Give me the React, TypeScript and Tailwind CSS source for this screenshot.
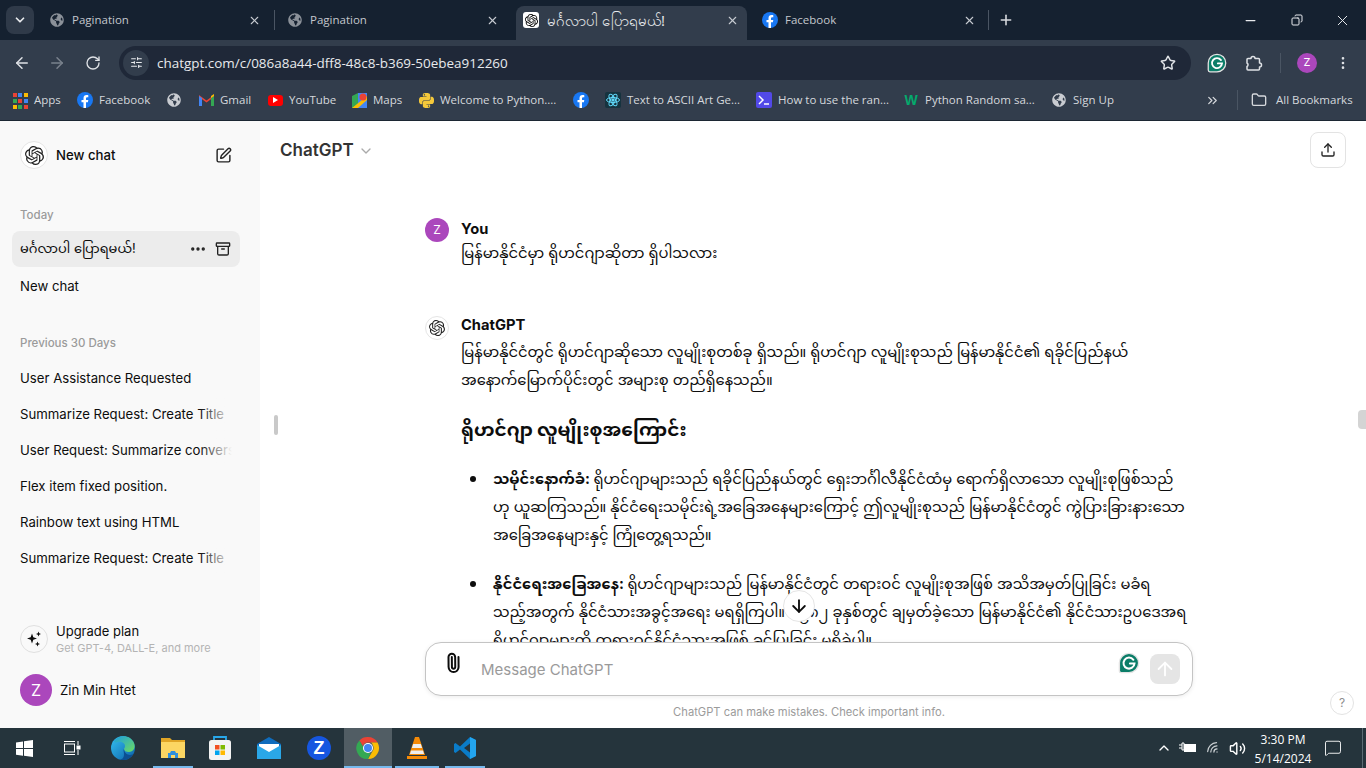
import React from "react";
import {
  ArrowLeft,
  ArrowRight,
  RotateCw,
  Star,
  EllipsisVertical,
  ChevronDown,
  ChevronsRight,
  Folder,
  X,
  Plus,
  Minus,
  Copy,
  Ellipsis,
  Archive,
  SquarePen,
  Upload,
  Paperclip,
  ArrowUp,
  ArrowDown,
  SlidersHorizontal,
  ChevronUp,
  Volume2,
  Wifi,
  MessageSquare,
} from "lucide-react";
import { SiOpenai, SiPython } from "react-icons/si";
import { FaGlobeAmericas } from "react-icons/fa";

const MY = "font-['Inter','Noto_Sans_Myanmar','Padauk','Noto_Sans','sans-serif']";

function FbIcon({ size = 16 }: { size?: number }) {
  return (
    <svg width={size} height={size} viewBox="0 0 16 16" className="shrink-0">
      <circle cx="8" cy="8" r="8" fill="#1877f2" />
      <path d="M10.9 10.3l.4-2.3H9V6.5c0-.6.3-1.2 1.3-1.2h1V3.3s-.9-.2-1.8-.2C7.7 3.1 6.5 4.300 6.500 6.300V8H4.500v2.300h2V16h2.500v-5.700z" fill="#fff" />
    </svg>
  );
}

function Tab({ title, icon, active, width }: { title: string; icon: React.ReactNode; active?: boolean; width: string }) {
  return (
    <div
      className={`${width} h-[34px] pb-[6px] flex items-center shrink-0 rounded-t-lg pl-[7px] pr-[8px] ${active ? "bg-[#323d4c]" : ""}`}
    >
      <span className="w-4 h-4 flex items-center justify-center shrink-0">{icon}</span>
      <span className={`flex-1 truncate ${active ? "ml-2 text-[15px] leading-5 text-[#e8eaed]" : "ml-[7px] text-[11.500px] text-[#c3c7cd]"}`}>{title}</span>
      <X size={13} className="text-[#c7cbd1] shrink-0" />
    </div>
  );
}

function Bookmark({ label, icon, width }: { label?: string; icon: React.ReactNode; width: string }) {
  return (
    <div className={`${width} flex items-center shrink-0`}>
      <span className="w-4 h-4 flex items-center justify-center shrink-0">{icon}</span>
      {label && <span className="ml-[6px] text-[11.500px] text-[#d5d8dc] whitespace-nowrap">{label}</span>}
    </div>
  );
}

function AppsIcon() {
  const colors = ["#ea4335", "#4285f4", "#fbbc04", "#34a853", "#ea4335", "#4285f4", "#fbbc04", "#34a853", "#ea4335"];
  return (
    <div className="grid grid-cols-3 gap-[2px] w-[14px] h-[14px]">
      {colors.map((c, i) => (
        <svg key={i} width="4" height="4"><rect width="4" height="4" fill={c} /></svg>
      ))}
    </div>
  );
}

function GrammarlyIcon({ size = 22 }: { size?: number }) {
  return (
    <svg width={size} height={size} viewBox="0 0 24 24">
      <path d="M12 1.500a10.500 10.500 0 1 1 0 21H3.500a2 2 0 0 1-2-2V12A10.500 10.500 0 0 1 12 1.500z" fill="#0b7d68" stroke="#e4e4e4" strokeWidth="1.500" />
      <path d="M16.800 8.500A6 6 0 1 0 18 12.500h-5" fill="none" stroke="#fff" strokeWidth="2.200" strokeLinecap="round" />
    </svg>
  );
}

function OpenAiBadge({ size, icon }: { size: string; icon: number }) {
  return (
    <div className={`${size} rounded-full border border-[#e5e5e5] bg-white flex items-center justify-center shrink-0`}>
      <SiOpenai size={icon} className="text-[#222]" />
    </div>
  );
}

function Sparkles() {
  return (
    <svg width="18" height="18" viewBox="0 0 18 18" fill="#0d0d0d">
      <path d="M7 3.500l1.300 3.700L12 8.500 8.300 9.800 7 13.500 5.700 9.800 2 8.500l3.700-1.300z" />
      <path d="M13.500 1.500l.7 1.800 1.800.7-1.800.7-.7 1.800-.7-1.800L11 4l1.800-.7z" />
      <path d="M12.500 11.500l.7 1.800 1.800.7-1.800.7-.7 1.800-.7-1.800-1.800-.7 1.800-.7z" />
    </svg>
  );
}

function SidebarRow({ label, fade }: { label: string; fade?: boolean }) {
  return (
    <div className="h-9 px-2 flex items-center text-[13.200px] text-[#0d0d0d] whitespace-nowrap overflow-hidden relative">
      {label}
      {fade && <div className="absolute right-0 top-0 bottom-0 w-8 bg-gradient-to-l from-[#f9f9f9] to-transparent" />}
    </div>
  );
}

function Sidebar() {
  return (
    <aside className="w-[260px] shrink-0 bg-[#f9f9f9] flex flex-col pl-3 pr-5 pt-5 pb-[22px]">
      <div className="h-7 px-2 flex items-center">
        <OpenAiBadge size="w-7 h-7" icon={19} />
        <span className="ml-2 mt-[2px] flex-1 text-[13.200px] font-medium text-[#0d0d0d]">New chat</span>
        <SquarePen size={17} strokeWidth={2} className="text-[#222]" />
      </div>
      <div className="mt-[38px] px-2 text-[11.500px] font-medium text-[#9b9b9b] leading-4">Today</div>
      <div className="mt-[8px] h-9 px-2 rounded-lg bg-[#ececec] flex items-center">
        <span className={`flex-1 text-[13px] text-[#0d0d0d] ${MY}`}>မင်္ဂလာပါ ပြောရမယ်!</span>
        <Ellipsis size={18} strokeWidth={2.500} className="text-[#222] mr-2" />
        <Archive size={16} className="text-[#222] mr-[1px]" />
      </div>
      <div className="mt-[2px]">
        <SidebarRow label="New chat" />
      </div>
      <div className="mt-[30px] px-2 text-[11.500px] font-medium text-[#9b9b9b] leading-4">Previous 30 Days</div>
      <div className="mt-[10px] w-[220px]">
        <SidebarRow label="User Assistance Requested" />
        <SidebarRow label="Summarize Request: Create Title" fade />
        <SidebarRow label="User Request: Summarize conversation" fade />
        <SidebarRow label="Flex item fixed position." />
        <SidebarRow label="Rainbow text using HTML" />
        <SidebarRow label="Summarize Request: Create Title" fade />
      </div>
      <div className="mt-auto px-2 flex items-center h-[36px]">
        <div className="w-7 h-7 rounded-full border border-[#e0e0e0] flex items-center justify-center shrink-0">
          <Sparkles />
        </div>
        <div className="ml-2">
          <div className="text-[13px] text-[#0d0d0d] leading-4">Upgrade plan</div>
          <div className="text-[11px] text-[#b4b4b4] leading-4 mt-[1px] whitespace-nowrap">Get GPT-4, DALL-E, and more</div>
        </div>
      </div>
      <div className="mt-[17px] px-2 flex items-center">
        <div className="w-8 h-8 rounded-full bg-[#ab47bc] text-white text-[16px] flex items-center justify-center shrink-0">Z</div>
        <span className="ml-2 mt-[2px] text-[13.200px] text-[#0d0d0d]">Zin Min Htet</span>
      </div>
    </aside>
  );
}

function BulletItem({ lead, lines }: { lead: string; lines: string[] }) {
  return (
    <li className="flex mb-[21px]">
      <span className="w-[68px] shrink-0 flex justify-end pr-[17px] h-7 items-center">
        <span className="w-[6px] h-[6px] rounded-full bg-[#0d0d0d]" />
      </span>
      <div>
        {lines.map((l, i) => (
          <div key={i} className="h-7 leading-7 whitespace-nowrap">
            {i === 0 && <b>{lead} </b>}
            {l}
          </div>
        ))}
      </div>
    </li>
  );
}

function Chat() {
  return (
    <main className="flex-1 min-w-0 bg-white flex flex-col relative">
      {/* header */}
      <div className="h-[56px] shrink-0 flex items-center justify-between pl-5 pr-5 pt-[2px]">
        <div className="flex items-center mt-[1px]">
          <span className="text-[17px] font-semibold text-[#333]">ChatGPT</span>
          <ChevronDown size={16} className="ml-1 text-[#aaa]" />
        </div>
        <div className="w-9 h-9 rounded-lg border border-[#e3e3e3] flex items-center justify-center">
          <Upload size={16} className="text-[#222]" />
        </div>
      </div>

      {/* messages */}
      <div className={`flex-1 min-h-0 overflow-hidden pl-[165px] pt-[41px] text-[14.700px] text-[#0d0d0d] ${MY}`}>
        <div className="flex">
          <div className="w-6 h-6 rounded-full bg-[#ab47bc] text-white text-[12px] flex items-center justify-center shrink-0">Z</div>
          <div className="ml-3">
            <div className="font-bold leading-5 mt-[1px]">You</div>
            <div className="h-7 leading-7">မြန်မာနိုင်ငံမှာ ရိုဟင်ဂျာဆိုတာ ရှိပါသလား</div>
          </div>
        </div>
        <div className="flex mt-[49px]">
          <OpenAiBadge size="w-6 h-6" icon={16} />
          <div className="ml-3">
            <div className="font-bold leading-5 -mt-[1px]">ChatGPT</div>
            <div className="mt-[3px] h-7 leading-7 whitespace-nowrap">မြန်မာနိုင်ငံတွင် ရိုဟင်ဂျာဆိုသော လူမျိုးစုတစ်ခု ရှိသည်။ ရိုဟင်ဂျာ လူမျိုးစုသည် မြန်မာနိုင်ငံ၏ ရခိုင်ပြည်နယ်</div>
            <div className="h-7 leading-7 whitespace-nowrap">အနောက်မြောက်ပိုင်းတွင် အများစု တည်ရှိနေသည်။</div>
            <div className="mt-[21px] h-7 leading-7 text-[18.500px] font-bold whitespace-nowrap">ရိုဟင်ဂျာ လူမျိုးစုအကြောင်း</div>
          </div>
        </div>
        <ul className="mt-[22px] ml-0">
          <BulletItem
            lead="သမိုင်းနောက်ခံ:"
            lines={[
              "ရိုဟင်ဂျာများသည် ရခိုင်ပြည်နယ်တွင် ရှေးဘင်္ဂါလီနိုင်ငံထံမှ ရောက်ရှိလာသော လူမျိုးစုဖြစ်သည်",
              "ဟု ယူဆကြသည်။ နိုင်ငံရေးသမိုင်းရဲ့အခြေအနေများကြောင့် ဤလူမျိုးစုသည် မြန်မာနိုင်ငံတွင် ကွဲပြားခြားနားသော",
              "အခြေအနေများနှင့် ကြုံတွေ့ရသည်။",
            ]}
          />
          <BulletItem
            lead="နိုင်ငံရေးအခြေအနေ:"
            lines={[
              "ရိုဟင်ဂျာများသည် မြန်မာနိုင်ငံတွင် တရားဝင် လူမျိုးစုအဖြစ် အသိအမှတ်ပြုခြင်း မခံရ",
              "သည့်အတွက် နိုင်ငံသားအခွင့်အရေး မရရှိကြပါ။ ၁၉၈၂ ခုနှစ်တွင် ချမှတ်ခဲ့သော မြန်မာနိုင်ငံ၏ နိုင်ငံသားဥပဒေအရ",
              "ရိုဟင်ဂျာများကို တရားဝင်နိုင်ငံသားအဖြစ် ခင်ပြုခြင်း မရှိခဲ့ပါ။",
            ]}
          />
        </ul>
      </div>

      {/* input */}
      <div className="shrink-0 pl-[165px]">
        <div className="w-[768px] h-[54px] rounded-2xl border border-[#c4c4c4] shadow-[0_1px_4px_rgba(0,0,0,0.08)] bg-white flex items-center pl-[17px] pr-3">
          <Paperclip size={20} strokeWidth={2.400} className="text-[#0d0d0d] -mt-3 -rotate-[45deg] shrink-0" />
          <span className="ml-[18px] mt-[3px] flex-1 text-[15px] text-[#9a9a9a]">Message ChatGPT</span>
          <span className="-mt-3 mr-[10px]"><GrammarlyIcon /></span>
          <div className="w-[30px] h-[30px] rounded-lg bg-[#e5e5e5] flex items-center justify-center">
            <ArrowUp size={22} className="text-white" />
          </div>
        </div>
      </div>
      <div className="h-[32px] shrink-0 flex items-center justify-center text-[11.200px] text-[#9b9b9b] pt-[1px] pr-[8px]">
        ChatGPT can make mistakes. Check important info.
      </div>

      {/* overlays */}
      <div className="absolute left-[14px] top-[294px] w-[4px] h-5 rounded-full bg-[#c9c9c9]" />
      <div className="absolute right-0 top-[289px] w-2 h-[19px] rounded-l-sm bg-[#d4d4d4]" />
      <div className="absolute left-[523px] top-[469px] w-8 h-8 rounded-full bg-white border border-[#e5e5e5] flex items-center justify-center">
        <ArrowDown size={20} strokeWidth={2.200} className="text-[#0d0d0d]" />
      </div>
      <div className="absolute right-[12px] bottom-[13px] w-[24px] h-[24px] rounded-full border border-[#e3e3e3] bg-white flex items-center justify-center text-[12px] text-[#8e8e8e]">?</div>
    </main>
  );
}

function EdgeIcon() {
  return (
    <svg width="26" height="26" viewBox="0 0 26 26">
      <defs>
        <linearGradient id="edgeA" x1="0" y1="0" x2="1" y2="1">
          <stop offset="0" stopColor="#35c1f1" />
          <stop offset="1" stopColor="#0b5fa8" />
        </linearGradient>
        <linearGradient id="edgeB" x1="0" y1="0" x2="1" y2="1">
          <stop offset="0" stopColor="#1b9de2" />
          <stop offset="1" stopColor="#6fdc5c" />
        </linearGradient>
      </defs>
      <circle cx="13" cy="13" r="12" fill="url(#edgeA)" />
      <path d="M4 6C8 0 20-1 24 8c2 5-1 9-5 9-3 0-5-1-5-3 0-1 1-1 1-3 0-3-4-5-7-4-2 .6-3 1-4-1z" fill="url(#edgeB)" />
      <path d="M14 14c0 3 3 6 6 6 1 0 2-.3 3-1-2 4-6 6-10 6-2 0-3-.5-3-.5 3 0 4-3 4-5 0-3-1-4 0-5.500z" fill="#0c4f92" />
    </svg>
  );
}

function FolderIcon() {
  return (
    <svg width="26" height="24" viewBox="0 0 26 24">
      <path d="M1 2h9l2 2h13v3H1z" fill="#e0a526" />
      <rect x="1" y="6" width="24" height="16" fill="#fcd663" />
      <path d="M8 22v-5h2l1-2h4l1 2h2v5z" fill="#2f8fdc" />
      <rect x="11" y="19" width="4" height="3" fill="#fcd663" />
    </svg>
  );
}

function StoreIcon() {
  return (
    <svg width="24" height="26" viewBox="0 0 24 26">
      <path d="M6 6V2h12v4" fill="none" stroke="#28a8ea" strokeWidth="1.800" />
      <rect x="1" y="5" width="22" height="20" rx="2.500" fill="#f3f3f3" />
      <rect x="7" y="10" width="4.500" height="4.500" fill="#f25022" />
      <rect x="12.500" y="10" width="4.500" height="4.500" fill="#7fba00" />
      <rect x="7" y="15.500" width="4.500" height="4.500" fill="#00a4ef" />
      <rect x="12.500" y="15.500" width="4.500" height="4.500" fill="#ffb900" />
    </svg>
  );
}

function MailIcon() {
  return (
    <svg width="26" height="24" viewBox="0 0 26 24">
      <path d="M1 8l12-7 12 7v15H1z" fill="#0f6cbd" />
      <path d="M3 8h20v7l-10 5-10-5z" fill="#fff" />
      <path d="M1 9l12 7 12-7v14H1z" fill="#2aa7e8" />
    </svg>
  );
}

function ZoomIcon() {
  return (
    <div className="w-6 h-6 rounded-full bg-[#1656e0] flex items-center justify-center text-white font-black text-[18px] leading-none font-['Liberation_Sans',sans-serif]">Z</div>
  );
}

function ChromeIcon() {
  return (
    <svg width="24" height="24" viewBox="0 0 24 24">
      <path d="M12 1a11 11 0 0 1 9.530 5.500H12a5.500 5.500 0 0 0-5.200 3.700L3.400 4.400A11 11 0 0 1 12 1z" fill="#ea4335" />
      <path d="M21.530 6.500A11 11 0 0 1 12 23l4.760-8.250A5.500 5.500 0 0 0 16.760 9 5.500 5.500 0 0 0 15 6.500z" fill="#fbbc04" />
      <path d="M12 23A11 11 0 0 1 3.400 4.400l4.830 8.350A5.500 5.500 0 0 0 14.700 16.800z" fill="#34a853" />
      <circle cx="12" cy="12" r="5" fill="#fff" />
      <circle cx="12" cy="12" r="4" fill="#4285f4" />
    </svg>
  );
}

function VlcIcon() {
  return (
    <svg width="22" height="24" viewBox="0 0 22 24">
      <path d="M9 1h4l6 18H3z" fill="#f58a07" />
      <path d="M7.200 8h7.600l1.300 4H5.900zM5 14.500h12l1 3.500H4z" fill="#eee" />
      <path d="M1 20h20v3H1z" fill="#f58a07" />
    </svg>
  );
}

function VsCodeIcon() {
  return (
    <svg width="24" height="24" viewBox="0 0 24 24">
      <path d="M17 1l6 3v16l-6 3L7 13.500 2.500 17 1 16V8l1.500-1L7 10.500z" fill="#0a7cc9" />
      <path d="M17 1l6 3v16l-6 3z" fill="#23a5ef" />
      <path d="M17 7.500L11 12l6 4.500z" fill="#25343c" />
    </svg>
  );
}

function TaskSlot({ children, width, open, active }: { children: React.ReactNode; width: string; open?: boolean; active?: boolean }) {
  return (
    <div className={`${width} h-10 relative flex items-center justify-center shrink-0 ${active ? "bg-[#515d64]" : ""}`}>
      {children}
      {open && <div className={`absolute bottom-0 h-[2px] bg-[#76b9ed] ${active ? "left-0 right-0" : "left-[3px] right-[3px]"}`} />}
    </div>
  );
}

function Taskbar() {
  return (
    <footer className="h-10 shrink-0 bg-[#25343c] flex items-center font-['Open_Sans',sans-serif]">
      <TaskSlot width="w-12">
        <svg width="17" height="17" viewBox="0 0 17 17" fill="#fff">
          <path d="M0 2.400L7 1.400v6.700H0zM8 1.300L17 0v8.100H8zM0 9h7v6.700L0 14.700zM8 9h9v8l-9-1.300z" />
        </svg>
      </TaskSlot>
      <TaskSlot width="w-[48px]">
        <svg width="18" height="16" viewBox="0 0 18 16" fill="none" stroke="#fff" strokeWidth="1">
          <rect x="1.500" y="4" width="10" height="8" />
          <path d="M1 1.500h11M1 14.500h11M15 1v4M15 10v5" />
          <rect x="14" y="6" width="3" height="3" fill="#fff" />
        </svg>
      </TaskSlot>
      <TaskSlot width="w-[54px]"><EdgeIcon /></TaskSlot>
      <TaskSlot width="w-[46px]" open><FolderIcon /></TaskSlot>
      <TaskSlot width="w-[48px]"><StoreIcon /></TaskSlot>
      <TaskSlot width="w-[50px]"><MailIcon /></TaskSlot>
      <TaskSlot width="w-[50px]"><ZoomIcon /></TaskSlot>
      <TaskSlot width="w-[48px]" open active><ChromeIcon /></TaskSlot>
      <TaskSlot width="w-[50px]" open><VlcIcon /></TaskSlot>
      <TaskSlot width="w-[46px]" open><VsCodeIcon /></TaskSlot>
      <div className="flex-1" />
      <ChevronUp size={16} className="text-white mr-[7px]" />
      <svg width="18" height="12" viewBox="0 0 18 12" className="mr-[9px]">
        <path d="M0 3h3M0 6h3M3 1v7h2V1z" stroke="#fff" fill="none" />
        <rect x="5" y="2" width="12" height="8" fill="#fff" />
      </svg>
      <Wifi size={15} className="text-[#c9cfd2] mr-[8px] -rotate-45" />
      <Volume2 size={17} className="text-white" />
      <div className="w-[80px] -ml-[3px] pt-[1px] text-center text-[12px] leading-[19px] text-white">
        <div>3:30 PM</div>
        <div>5/14/2024</div>
      </div>
      <MessageSquare size={18} strokeWidth={1.200} className="text-white ml-[1px] mr-[20px]" />
      <div className="w-px h-10 bg-[#5b6b73] mr-[3px]" />
    </footer>
  );
}

export default function App() {
  return (
    <div className="w-[1366px] h-[768px] overflow-hidden flex flex-col font-['Inter','Liberation_Sans',sans-serif]">
      {/* chrome */}
      <div className="bg-[#152130] h-[40px] shrink-0 flex items-end pl-[6px] font-['Open_Sans',sans-serif]">
        <div className="w-[28px] h-[28px] mb-[6px] rounded-lg bg-[#2f3a49] flex items-center justify-center mr-[8px] shrink-0">
          <ChevronDown size={14} strokeWidth={3} className="text-[#e8eaed]" />
        </div>
        <Tab width="w-[227px]" title="Pagination" icon={<FaGlobeAmericas size={14} className="text-[#8b9199]" />} />
        <div className="w-px h-5 bg-[#4a5563] mb-[10px] ml-[5px] mr-[5px] shrink-0" />
        <Tab width="w-[227px]" title="Pagination" icon={<FaGlobeAmericas size={14} className="text-[#8b9199]" />} />
        <div className="w-[9px] shrink-0" />
        <Tab
          active
          width="w-[231px]"
          title="မင်္ဂလာပါ ပြောရမယ်!"
          icon={
            <span className="w-4 h-4 bg-white rounded-[3px] flex items-center justify-center">
              <SiOpenai size={13} className="text-black" />
            </span>
          }
        />
        <div className="w-[8px] shrink-0" />
        <Tab width="w-[229px]" title="Facebook" icon={<FbIcon />} />
        <div className="w-px h-5 bg-[#4a5563] mb-[10px] ml-[4px] shrink-0" />
        <Plus size={16} strokeWidth={2.400} className="text-[#d6d9dd] mb-[12px] ml-[9px]" />
        <div className="flex-1" />
        <div className="flex items-center self-start h-[40px] text-[#e8eaed]">
          <Minus size={15} className="mr-[33px]" />
          <Copy size={12} className="mr-[31px] -scale-x-100" />
          <X size={17} strokeWidth={1.400} className="mr-[15px]" />
        </div>
      </div>

      <div className="bg-[#323d4c] h-[45px] shrink-0 flex items-center pl-[13px]">
        <ArrowLeft size={18} className="text-[#dfe2e6]" />
        <ArrowRight size={18} className="text-[#7a828d] ml-[17px]" />
        <RotateCw size={16} className="text-[#dfe2e6] ml-[19px]" />
        <div className="ml-[18px] w-[1072px] h-[34px] rounded-full bg-[#1f2838] flex items-center pl-1 pr-[15px] shrink-0">
          <div className="w-[26px] h-[26px] rounded-full bg-[#323d4c] flex items-center justify-center">
            <SlidersHorizontal size={13} className="text-[#e8eaed]" />
          </div>
          <span className="ml-2 mt-[1px] flex-1 text-[13.460px] text-[#e8eaed] font-['Open_Sans',sans-serif]">chatgpt.com/c/086a8a44-dff8-48c8-b369-50ebea912260</span>
          <Star size={16} strokeWidth={2.200} className="text-[#dfe2e6]" />
        </div>
        <span className="ml-[16px]"><GrammarlyIcon size={20} /></span>
        <svg width="18" height="18" viewBox="0 0 18 18" fill="none" stroke="#dfe2e6" strokeWidth="1.500" strokeLinejoin="round" className="ml-[18px] shrink-0">
          <path d="M3 4.500h3a2 2 0 0 1 4 0h3.500a1 1 0 0 1 1 1V9a2 2 0 0 1 0 4v2a1 1 0 0 1-1 1H3a1 1 0 0 1-1-1v-2.500a2 2 0 0 0 0-3.500V5.500a1 1 0 0 1 1-1z" />
        </svg>
        <div className="w-px h-5 bg-[#4a5563] ml-[17px] shrink-0" />
        <div className="ml-[16px] w-5 h-5 rounded-full bg-[#ab47bc] text-white text-[11px] flex items-center justify-center shrink-0">Z</div>
        <EllipsisVertical size={16} className="text-[#dfe2e6] ml-[18px] shrink-0" />
      </div>

      <div className="bg-[#323d4c] h-[36px] shrink-0 flex items-center pl-[12px] pb-[5px] border-b border-[#1c2733] font-['Open_Sans',sans-serif]">
        <Bookmark width="w-[65px]" label="Apps" icon={<AppsIcon />} />
        <Bookmark width="w-[89px]" label="Facebook" icon={<FbIcon />} />
        <Bookmark width="w-[32px]" icon={<FaGlobeAmericas size={14} className="text-[#c9ccd1]" />} />
        <Bookmark
          width="w-[69px]"
          label="Gmail"
          icon={
            <svg width="15" height="12" viewBox="0 0 15 12">
              <path d="M0 1l7.500 5.500L15 1v2L7.500 8.500 0 3z" fill="#ea4335" />
              <path d="M0 2v10h3V4z" fill="#4285f4" />
              <path d="M15 2v10h-3V4z" fill="#34a853" />
              <path d="M12 2l3-2v2l-3 2z" fill="#fbbc04" />
            </svg>
          }
        />
        <Bookmark
          width="w-[84px]"
          label="YouTube"
          icon={
            <span className="w-[15px] h-[11px] rounded-[3px] bg-[#f00] flex items-center justify-center">
              <span className="border-l-[5px] border-l-white border-y-[3px] border-y-transparent" />
            </span>
          }
        />
        <Bookmark
          width="w-[67px]"
          label="Maps"
          icon={
            <svg width="15" height="15" viewBox="0 0 15 15">
              <path d="M0 3l6-3v15l-6-0z" fill="#34a853" />
              <path d="M6 0h9v15H6z" fill="#4285f4" />
              <path d="M0 15L15 3v4L6 15z" fill="#fbbc04" />
              <circle cx="11" cy="4" r="3.500" fill="#ea4335" />
            </svg>
          }
        />
        <Bookmark width="w-[155px]" label="Welcome to Python...." icon={<SiPython size={15} className="text-[#f5c93b]" />} />
        <Bookmark width="w-[32px]" icon={<FbIcon />} />
        <Bookmark
          width="w-[151px]"
          label="Text to ASCII Art Ge..."
          icon={
            <svg width="16" height="16" viewBox="0 0 16 16" fill="none" stroke="#61dafb">
              <rect width="16" height="16" rx="2" fill="#16333f" stroke="none" />
              <ellipse cx="8" cy="8" rx="6.500" ry="2.500" />
              <ellipse cx="8" cy="8" rx="6.500" ry="2.500" transform="rotate(60 8 8)" />
              <ellipse cx="8" cy="8" rx="6.500" ry="2.500" transform="rotate(120 8 8)" />
              <circle cx="8" cy="8" r="1.200" fill="#61dafb" />
            </svg>
          }
        />
        <Bookmark
          width="w-[147px]"
          label="How to use the ran..."
          icon={
            <span className="w-4 h-4 rounded-[2px] bg-[#5249e8] flex items-center justify-center">
              <svg width="12" height="12" viewBox="0 0 12 12" fill="none" stroke="#fff" strokeWidth="1.500"><path d="M1 2l4 4-4 4M6 10h5" /></svg>
            </span>
          }
        />
        <Bookmark
          width="w-[148px]"
          label="Python Random sa..."
          icon={<span className="text-[14px] font-black text-[#04aa6d] font-['Liberation_Sans',sans-serif]">W</span>}
        />
        <Bookmark width="w-[154px]" label="Sign Up" icon={<FaGlobeAmericas size={14} className="text-[#c9ccd1]" />} />
        <ChevronsRight size={15} className="text-[#d5d8dc] shrink-0" />
        <div className="w-px h-5 bg-[#4a5563] ml-[17px] shrink-0" />
        <Folder size={16} className="text-[#d5d8dc] ml-[13px] shrink-0" />
        <span className="ml-[9px] text-[11.500px] text-[#d5d8dc] whitespace-nowrap">All Bookmarks</span>
      </div>

      {/* page */}
      <div className="flex-1 min-h-0 flex">
        <Sidebar />
        <Chat />
      </div>

      <Taskbar />
    </div>
  );
}
